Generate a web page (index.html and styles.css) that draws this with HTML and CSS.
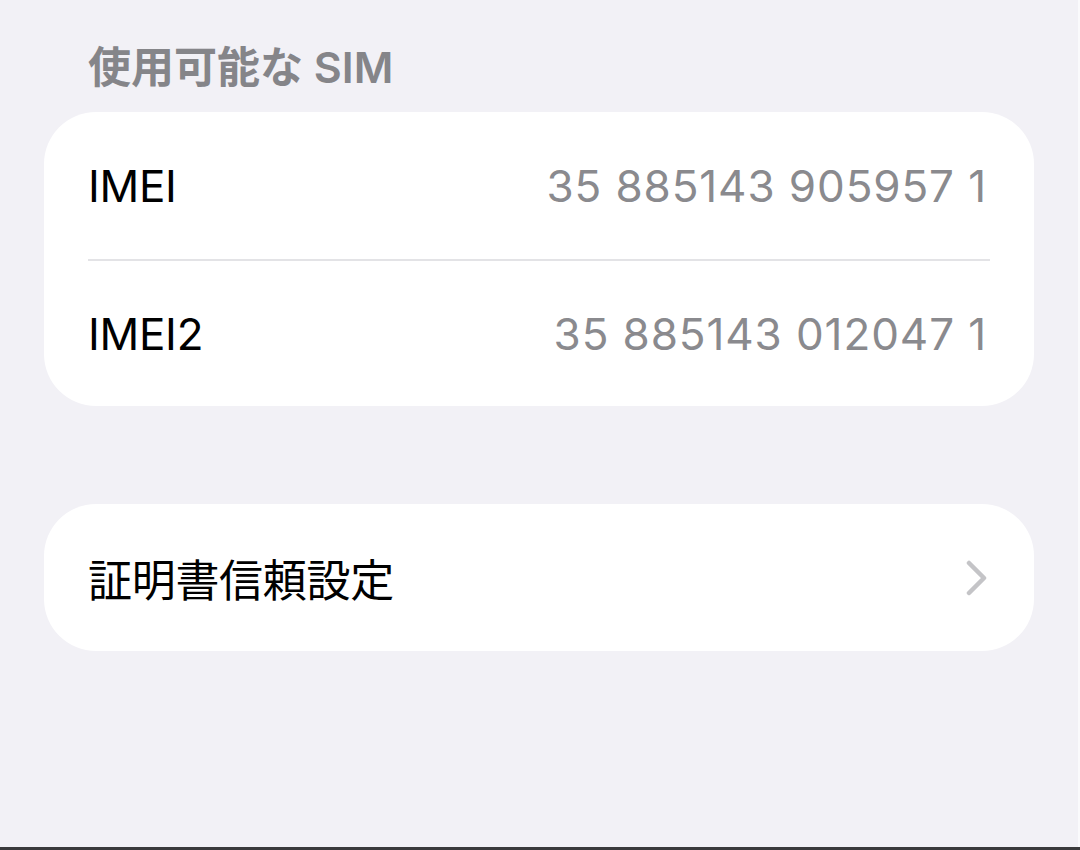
FILE: index.html
```html
<!DOCTYPE html>
<html lang="ja">
<head>
    <meta charset="UTF-8">
    <title>情報</title>
    <link rel="stylesheet" href="styles.css">
</head>
<body>
    <div id="page">
        <div class="section-title">使用可能な SIM</div>

        <div class="group">
            <div class="row">
                <span class="label">IMEI</span>
                <span class="value">35 885143 905957 1</span>
            </div>
            <div class="row">
                <span class="label">IMEI2</span>
                <span class="value">35 885143 012047 1</span>
            </div>
        </div>

        <div class="group">
            <div class="row link">
                <span class="label">証明書信頼設定</span>
                <svg class="chevron" width="22" height="36" viewBox="0 0 22 36">
                    <path d="M3 3 L18 18 L3 33" fill="none" stroke="#c4c4c7" stroke-width="4.5" stroke-linecap="round" stroke-linejoin="round"/>
                </svg>
            </div>
        </div>
    </div>
    <div id="home-bar"></div>
</body>
</html>
```

FILE: styles.css
```css
* {
    margin: 0;
    padding: 0;
    box-sizing: border-box;
}

body {
    font-family: Inter, 'Noto Sans CJK JP', sans-serif;
    background: #f2f1f6;
    color: #000;
    height: 850px;
    overflow: hidden;
    display: flex;
    flex-direction: column;
}

#page {
    flex: 1;
    padding: 38px 44px 0 44px;
    border-right: 2px solid #fafafc;
}

#home-bar {
    height: 3px;
    background: #3a3a3c;
}

.section-title {
    font-size: 43px;
    font-weight: 600;
    color: #858589;
    padding-left: 44px;
    height: 74px;
    line-height: 58px;
}

.group {
    background: #fff;
    border-radius: 52px;
    margin-bottom: 98px;
}

.row {
    display: flex;
    align-items: center;
    justify-content: space-between;
    height: 147px;
    margin: 0 44px;
    font-size: 44px;
    letter-spacing: -0.3px;
}

.row + .row {
    border-top: 2px solid #e3e3e6;
}

.value {
    color: #8a8a8e;
    letter-spacing: 0.9px;
    padding-right: 3px;
}

.row.link {
    margin-right: 46px;
}
```
